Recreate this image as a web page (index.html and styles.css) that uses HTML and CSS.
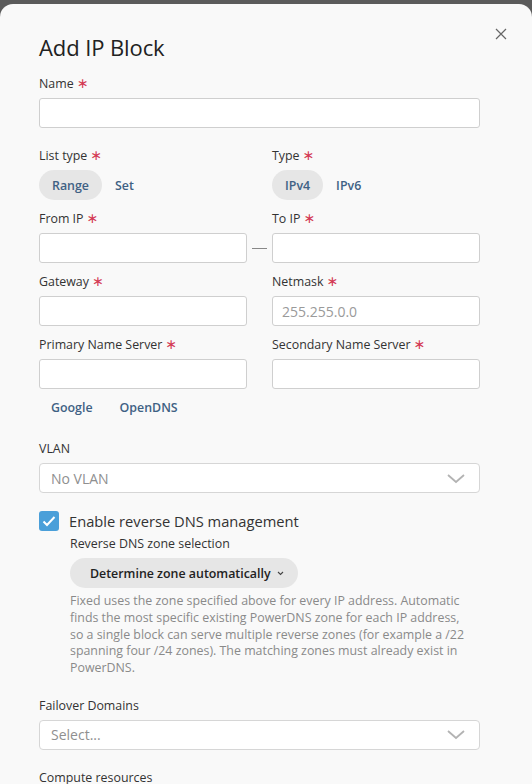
FILE: index.html
```html
<!DOCTYPE html>
<html lang="en">
<head>
    <meta charset="UTF-8">
    <meta name="viewport" content="width=device-width, initial-scale=1.0">
    <title>Add IP Block</title>
    <link rel="stylesheet" href="styles.css">
</head>
<body>
    <div class="modal">
        <button class="close" type="button" aria-label="Close">
            <svg width="12" height="12" viewBox="0 0 12 12"><path d="M1 1 L11 11 M11 1 L1 11" stroke="#666" stroke-width="1.2" fill="none"/></svg>
        </button>
        <h2 class="title">Add IP Block</h2>

        <form class="form">
            <div class="field field-wide">
                <label class="lbl">Name <span class="req">∗</span></label>
                <input class="inp" type="text">
            </div>

            <div class="pair">
                <div class="field">
                    <label class="lbl">List type <span class="req">∗</span></label>
                    <div class="toggle">
                        <button type="button" class="pill active">Range</button>
                        <button type="button" class="pill">Set</button>
                    </div>
                </div>
                <div class="field">
                    <label class="lbl">Type <span class="req">∗</span></label>
                    <div class="toggle">
                        <button type="button" class="pill active">IPv4</button>
                        <button type="button" class="pill">IPv6</button>
                    </div>
                </div>
            </div>

            <div class="range">
                <label class="lbl">From IP <span class="req">∗</span></label>
                <span></span>
                <label class="lbl">To IP <span class="req">∗</span></label>
                <input class="inp" type="text">
                <span class="dash"></span>
                <input class="inp" type="text">
            </div>

            <div class="pair">
                <div class="field">
                    <label class="lbl">Gateway <span class="req">∗</span></label>
                    <input class="inp" type="text">
                </div>
                <div class="field">
                    <label class="lbl">Netmask <span class="req">∗</span></label>
                    <input class="inp" type="text" placeholder="255.255.0.0">
                </div>
            </div>

            <div class="pair">
                <div class="field">
                    <label class="lbl">Primary Name Server <span class="req">∗</span></label>
                    <input class="inp" type="text">
                </div>
                <div class="field">
                    <label class="lbl">Secondary Name Server <span class="req">∗</span></label>
                    <input class="inp" type="text">
                </div>
            </div>

            <div class="presets">
                <button type="button" class="pill">Google</button>
                <button type="button" class="pill">OpenDNS</button>
            </div>

            <div class="field field-select field-vlan">
                <label class="lbl">VLAN</label>
                <div class="select">
                    <span class="placeholder">No VLAN</span>
                    <svg width="20" height="11" viewBox="0 0 20 11"><path d="M2 2 L10 9 L18 2" stroke="#b3b3b3" stroke-width="1.8" fill="none"/></svg>
                </div>
            </div>

            <label class="check">
                <span class="box">
                    <svg width="14" height="12" viewBox="0 0 14 12"><path d="M1.5 6.5 L5 10 L12.5 2" stroke="#fff" stroke-width="2" fill="none"/></svg>
                </span>
                Enable reverse DNS management
            </label>

            <div class="rdns">
                <div class="sublbl">Reverse DNS zone selection</div>
                <button type="button" class="dropdown">Determine zone automatically
                    <svg width="7" height="5" viewBox="0 0 7 5"><path d="M1 1 L3.5 3.5 L6 1" stroke="#444" stroke-width="1.1" fill="none"/></svg>
                </button>
                <p class="help">Fixed uses the zone specified above for every IP address. Automatic finds the most specific existing PowerDNS zone for each IP address, so a single block can serve multiple reverse zones (for example a /22 spanning four /24 zones). The matching zones must already exist in PowerDNS.</p>
            </div>

            <div class="field field-select field-failover">
                <label class="lbl">Failover Domains</label>
                <div class="select">
                    <span class="placeholder">Select...</span>
                    <svg width="20" height="11" viewBox="0 0 20 11"><path d="M2 2 L10 9 L18 2" stroke="#b3b3b3" stroke-width="1.8" fill="none"/></svg>
                </div>
            </div>

            <div class="field">
                <label class="lbl">Compute resources</label>
            </div>
        </form>
    </div>
</body>
</html>
```

FILE: styles.css
```css
html, body {
    margin: 0;
    padding: 0;
}
body {
    background-color: #5b5b5b;
    font-family: "Open Sans", "Liberation Sans", sans-serif;
    color: #333;
    height: 784px;
    overflow: hidden;
}
.modal {
    position: relative;
    margin-top: 4px;
    background-color: #f9f9f9;
    border-radius: 13px 13px 0 0;
    padding: 20px 52px 0 39px;
    min-height: 780px;
    box-sizing: border-box;
}
.close {
    position: absolute;
    top: 24px;
    right: 25px;
    border: none;
    background: none;
    padding: 0;
    width: 12px;
    height: 12px;
    cursor: pointer;
}
.close svg {
    display: block;
}
.title {
    margin: 0;
    font-size: 22px;
    font-weight: 500;
    line-height: 46px;
    color: #222;
    letter-spacing: -0.1px;
}
.form {
    display: flex;
    flex-direction: column;
    margin-top: 4px;
}
.field {
    display: flex;
    flex-direction: column;
}
.field-wide {
    margin-bottom: 18px;
}
.lbl {
    font-size: 12.4px;
    line-height: 18px;
    margin-bottom: 5px;
    color: #333;
}
.req {
    color: #d43b54;
    font-size: 14px;
    font-family: "DejaVu Sans", sans-serif;
}
.inp {
    height: 30px;
    box-sizing: border-box;
    border: 1px solid #cfcfcf;
    border-radius: 3px;
    background: #fff;
    padding: 0 9px;
    font-family: inherit;
    font-size: 14px;
    color: #333;
    width: 100%;
}
.inp::placeholder {
    color: #9a9a9a;
}
.pair {
    display: grid;
    grid-template-columns: 1fr 1fr;
    column-gap: 25px;
    margin-bottom: 9px;
}
.range {
    display: grid;
    grid-template-columns: 1fr 25px 1fr;
    margin-bottom: 9px;
}
.dash {
    align-self: center;
    justify-self: center;
    width: 15px;
    height: 1px;
    background: #888;
}
.toggle {
    display: flex;
}
.pill {
    height: 30px;
    border: none;
    border-radius: 15px;
    background: transparent;
    padding: 0 13px;
    font-family: inherit;
    font-size: 12.4px;
    font-weight: 600;
    color: #3f6184;
    cursor: pointer;
}
.pill.active {
    background-color: #e6e6e6;
}
.presets {
    display: flex;
    gap: 3px;
    margin-top: -6px;
    margin-bottom: 18px;
}
.presets .pill {
    padding: 0 12px;
}
.select {
    height: 30px;
    box-sizing: border-box;
    border: 1px solid #d6d6d6;
    border-radius: 4px;
    background: #fff;
    display: flex;
    align-items: center;
    justify-content: space-between;
    padding: 0 13px 0 11px;
}
.select .placeholder {
    font-size: 14px;
    color: #8f8f8f;
}
.select svg {
    display: block;
}
.field-select {
    margin-bottom: 18px;
}
.field-failover {
    margin-bottom: 19px;
}
.check {
    display: flex;
    align-items: center;
    gap: 10px;
    font-size: 14.7px;
    line-height: 20px;
    color: #333;
}
.box {
    width: 20px;
    height: 20px;
    border-radius: 3px;
    background-color: #4a9fd9;
    display: flex;
    align-items: center;
    justify-content: center;
}
.rdns {
    padding: 0 12px 0 31px;
    margin-top: 4px;
    margin-bottom: 20px;
}
.sublbl {
    font-size: 12.4px;
    line-height: 18px;
    margin-bottom: 5px;
}
.dropdown {
    height: 30px;
    border: none;
    border-radius: 15px;
    background-color: #e6e6e6;
    padding: 0 14px 0 20px;
    font-family: inherit;
    font-size: 12.4px;
    font-weight: 600;
    color: #222;
    display: inline-flex;
    align-items: center;
    gap: 6px;
    cursor: pointer;
}
.help {
    margin: 5px 0 0;
    font-size: 12.4px;
    line-height: 16.8px;
    color: #8a8a8a;
}
```
